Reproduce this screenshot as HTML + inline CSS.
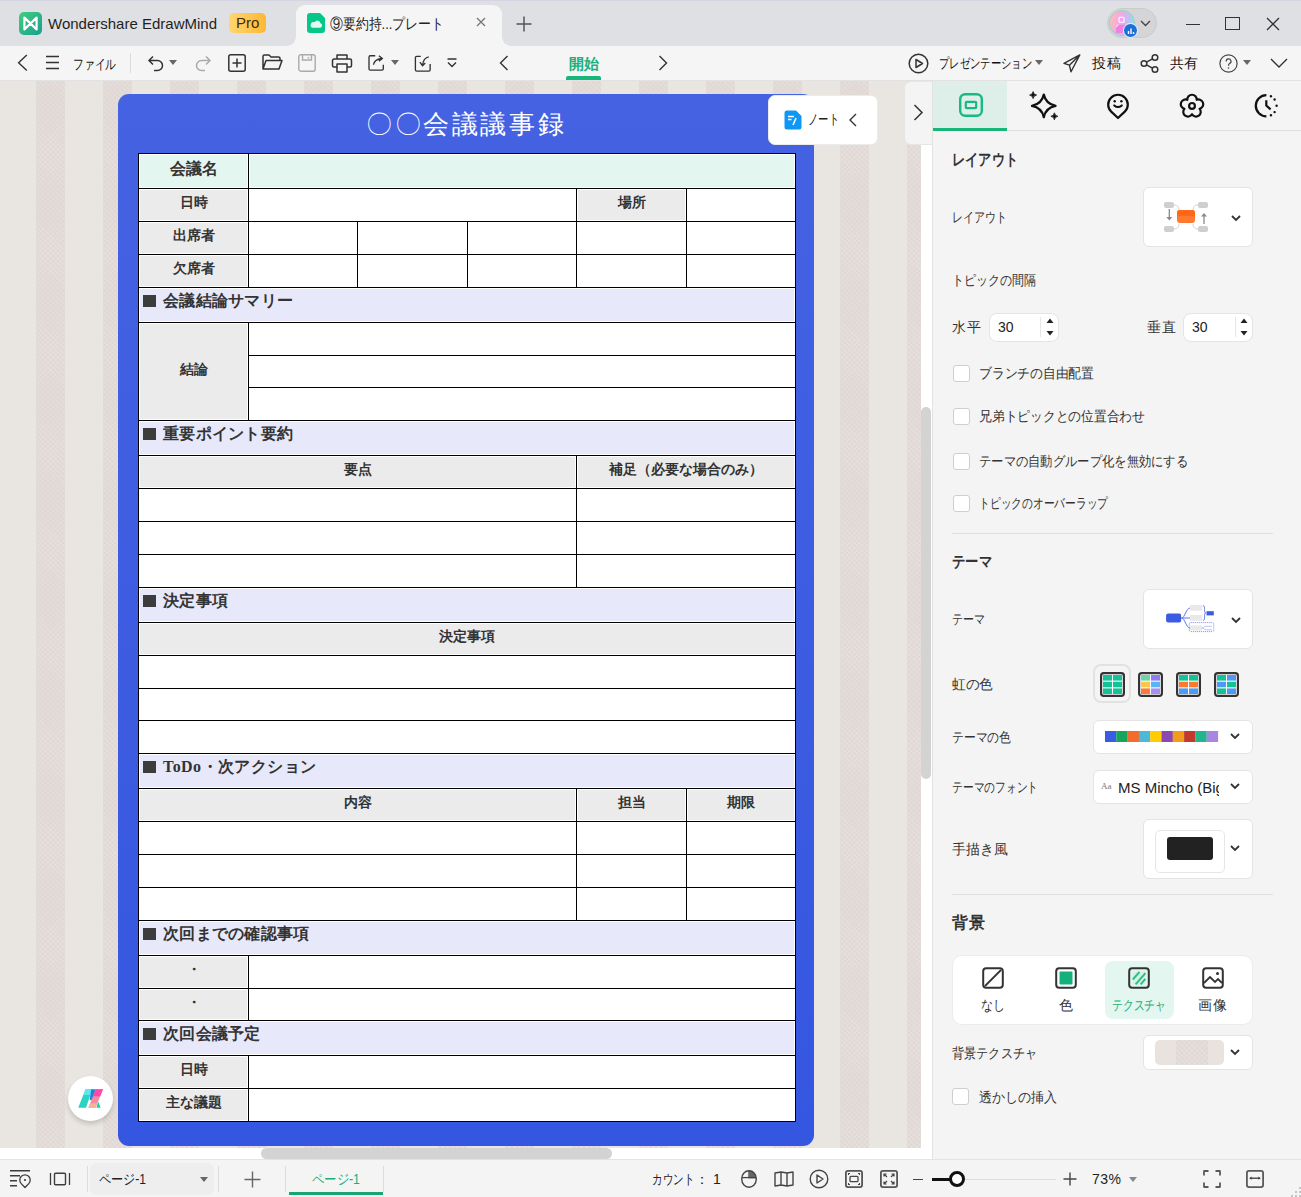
<!DOCTYPE html><html><head><meta charset="utf-8"><style>
*{box-sizing:border-box;margin:0;padding:0}
html,body{width:1301px;height:1197px;overflow:hidden;background:#f4f4f4;font-family:"Liberation Sans",sans-serif;color:#222;position:relative}
.a{position:absolute}
.t{position:absolute;white-space:nowrap;line-height:1}
svg{position:absolute;overflow:visible}
.cell{position:absolute;background:#fff}
.in{position:absolute;left:1px;top:1px;right:1px;bottom:1px}
.g{background:#ebebeb}
.m{background:#e3f6f0}
.l{background:#e7e8f9}
.ct{position:absolute;left:0;right:0;text-align:center;font-family:"Liberation Serif",serif;font-weight:bold;color:#333;white-space:nowrap;line-height:1}
.ht{position:absolute;font-family:"Liberation Serif",serif;font-weight:bold;color:#333;white-space:nowrap;line-height:1;font-size:16px;letter-spacing:0.25px}
.sq{position:absolute;width:13px;height:12px;background:#3c3c3c}
.lbl{font-size:14px;color:#333}
.hd{font-size:16px;font-weight:bold;color:#333}
.box{position:absolute;background:#fff;border:1px solid #e4e4e4;border-radius:6px}
.tex{top:0;width:29px;height:1067px;background-color:#e0d8d4;background-image:repeating-linear-gradient(45deg,rgba(255,255,255,0.13) 0 1px,transparent 1px 3.5px),repeating-linear-gradient(-45deg,rgba(255,255,255,0.11) 0 1px,transparent 1px 3.5px)}
.cb{position:absolute;width:17px;height:17px;background:#fff;border:1px solid #cfcfcf;border-radius:3px}
</style></head><body>
<div class="a" style="left:0;top:0;width:1301px;height:46px;background:#dfe0e3"></div>
<div class="a" style="left:0;top:0;width:1301px;height:1px;background:#d4d4e2"></div>
<div class="a" style="left:19px;top:12px;width:23px;height:23px;border-radius:5px;background:linear-gradient(135deg,#3fcf7f,#1a9e8e)"></div>
<svg style="left:19px;top:12px" width="23" height="23" viewBox="0 0 23 23"><path d="M5.4 5.6 L5.4 17.4 L17.6 5.6 L17.6 17.4 Z" fill="none" stroke="#fff" stroke-width="2.2" stroke-linejoin="round"/></svg>
<div class="t" style="left:48px;top:16px;font-size:15px;color:#1f1f1f">Wondershare EdrawMind</div>
<div class="a" style="left:229px;top:13px;width:37px;height:20px;border-radius:5px;background:linear-gradient(90deg,#ffd670,#ffb733)"></div>
<div class="t" style="left:236px;top:15px;font-size:15px;color:#3f2a0c">Pro</div>
<div class="a" style="left:296px;top:5px;width:206px;height:41px;background:#f5f5f5;border-radius:9px 9px 0 0"></div>
<div class="a" style="left:287px;top:37px;width:9px;height:9px;background:radial-gradient(circle at 0 0,#dfe0e3 8.5px,#f5f5f5 9px)"></div>
<div class="a" style="left:502px;top:37px;width:9px;height:9px;background:radial-gradient(circle at 100% 0,#dfe0e3 8.5px,#f5f5f5 9px)"></div>
<svg style="left:307px;top:13px" width="18" height="20" viewBox="0 0 18 20"><path d="M3 0H13L18 5V17A3 3 0 0 1 15 20H3A3 3 0 0 1 0 17V3A3 3 0 0 1 3 0Z" fill="#05c78a"/><path d="M5.5 14.8H13a2.3 2.3 0 0 0 0.4-4.5a3 3 0 0 0-5.7-1a2.6 2.6 0 0 0-2.2 5.5Z" fill="#e6f7f2"/></svg>
<div class="t" style="left:330px;top:16px;font-size:15px;color:#222;transform:scaleX(0.860);transform-origin:0 0">⑨要約持...プレート</div>
<svg style="left:476px;top:17px" width="10" height="10" viewBox="0 0 10 10"><path d="M1 1L9 9M9 1L1 9" stroke="#777" stroke-width="1.3"/></svg>
<svg style="left:516px;top:16px" width="16" height="16" viewBox="0 0 16 16"><path d="M8 0.5V15.5M0.5 8H15.5" stroke="#555" stroke-width="1.5"/></svg>
<div class="a" style="left:1107px;top:8px;width:50px;height:30px;border-radius:15px;background:#d5d5d7;border:1px solid #cbcbcd"></div>
<div class="a" style="left:1109px;top:10px;width:26px;height:26px;border-radius:13px;background:linear-gradient(100deg,#fcc3b8 0%,#f8a8dc 35%,#d2b6f4 62%,#86e4f2 100%);border:1.5px solid #86dcb8"></div>
<svg style="left:1113px;top:13px" width="18" height="20" viewBox="0 0 18 20"><rect x="6" y="4.2" width="5" height="5" rx="0.8" fill="#f5a3ef" stroke="#fff" stroke-width="1.1"/><path d="M3 20 V14 Q3 11.8 5.5 11.8 H11.5 Q14 11.8 14 14 V20Z" fill="#f07fe6"/><path d="M3.5 14 Q3.5 11.8 5.5 11.8" fill="none" stroke="#fff" stroke-width="0.9"/></svg>
<div class="a" style="left:1123px;top:23px;width:15px;height:15px;border-radius:8px;background:#1e6fd6;border:1.5px solid #fff"></div>
<svg style="left:1127px;top:27px" width="8" height="8" viewBox="0 0 8 8"><path d="M1.5 7V4M4 7V1.5M6.5 7V5" stroke="#fff" stroke-width="1.4"/></svg>
<svg style="left:1140px;top:20px" width="11" height="7" viewBox="0 0 11 7"><path d="M1 1L5.5 5.5L10 1" fill="none" stroke="#444" stroke-width="1.4"/></svg>
<div class="a" style="left:1186px;top:24px;width:14px;height:1.3px;background:#333"></div>
<div class="a" style="left:1225px;top:17px;width:15px;height:13px;border:1.3px solid #333"></div>
<svg style="left:1266px;top:17px" width="14" height="14" viewBox="0 0 14 14"><path d="M1 1L13 13M13 1L1 13" stroke="#333" stroke-width="1.3"/></svg>
<div class="a" style="left:0;top:46px;width:1301px;height:34px;background:#f5f5f5"></div>
<div class="a" style="left:0;top:80px;width:1301px;height:1px;background:#e2e2e2"></div>
<svg style="left:17px;top:54px" width="11" height="18" viewBox="0 0 11 18"><path d="M9.8 1L1.6 8.8L9.8 16.6" fill="none" stroke="#333" stroke-width="1.4"/></svg>
<svg style="left:46px;top:55px" width="13" height="15" viewBox="0 0 13 15"><path d="M0 1.5H13M0 7.5H13M0 13.5H13" stroke="#333" stroke-width="1.4"/></svg>
<div class="t" style="left:73px;top:57px;font-size:14px;color:#111;transform:scaleX(0.768);transform-origin:0 0">ファイル</div>
<div class="a" style="left:130px;top:53px;width:1px;height:20px;background:#dcdcdc"></div>
<svg style="left:147px;top:55px" width="18" height="17" viewBox="0 0 18 17"><path d="M6 1.5L2 5.5L6 9.5M2 5.5H10.5a5 5 0 0 1 0 10H7" fill="none" stroke="#333" stroke-width="1.5"/></svg>
<svg style="left:169px;top:60px" width="8" height="5" viewBox="0 0 8 5"><path d="M0 0H8L4 5Z" fill="#666"/></svg>
<svg style="left:194px;top:55px" width="18" height="17" viewBox="0 0 18 17"><path d="M12 1.5L16 5.5L12 9.5M16 5.5H7.5a5 5 0 0 0 0 10H11" fill="none" stroke="#aaa" stroke-width="1.5"/></svg>
<svg style="left:228px;top:54px" width="18" height="18" viewBox="0 0 18 18"><rect x="0.8" y="0.8" width="16.4" height="16.4" rx="2" fill="none" stroke="#333" stroke-width="1.5"/><path d="M9 4.5V13.5M4.5 9H13.5" stroke="#333" stroke-width="1.5"/></svg>
<svg style="left:262px;top:54px" width="21" height="17" viewBox="0 0 21 17"><path d="M1 15V2.5a1.5 1.5 0 0 1 1.5-1.5H7l2 2h7.5a1.5 1.5 0 0 1 1.5 1.5V6.5M1 15L4 6.5H20L17 15Z" fill="none" stroke="#333" stroke-width="1.5" stroke-linejoin="round"/></svg>
<svg style="left:298px;top:54px" width="18" height="18" viewBox="0 0 18 18"><rect x="0.8" y="0.8" width="16.4" height="16.4" rx="2" fill="none" stroke="#aaa" stroke-width="1.4"/><path d="M4.5 1V6H13.5V1M10.5 3V4.5" fill="none" stroke="#aaa" stroke-width="1.4"/></svg>
<svg style="left:332px;top:54px" width="20" height="19" viewBox="0 0 20 19"><path d="M5 5V1H15V5M5 13H2a1.5 1.5 0 0 1-1.5-1.5V6.5A1.5 1.5 0 0 1 2 5H18a1.5 1.5 0 0 1 1.5 1.5V11.5A1.5 1.5 0 0 1 18 13H15M5 10H15V18H5Z" fill="none" stroke="#333" stroke-width="1.5" stroke-linejoin="round"/></svg>
<svg style="left:368px;top:54px" width="19" height="17" viewBox="0 0 21 19"><path d="M8 2H2.5A1.5 1.5 0 0 0 1 3.5V16.5A1.5 1.5 0 0 0 2.5 18H15.5A1.5 1.5 0 0 0 17 16.5V12M6 12q1-6 9-7M12 2L16 5L12 8" fill="none" stroke="#333" stroke-width="1.5" stroke-linejoin="round"/></svg>
<svg style="left:391px;top:60px" width="8" height="5" viewBox="0 0 8 5"><path d="M0 0H8L4 5Z" fill="#666"/></svg>
<svg style="left:414px;top:55px" width="18" height="17" viewBox="0 0 19 19"><path d="M7 1.5H2.5A1.5 1.5 0 0 0 1 3V16.5A1.5 1.5 0 0 0 2.5 18H16A1.5 1.5 0 0 0 17.5 16.5V10M16 2q-6 1-7 9M6 8L9 12L12 9" fill="none" stroke="#333" stroke-width="1.5" stroke-linejoin="round"/></svg>
<svg style="left:447px;top:58px" width="10" height="11" viewBox="0 0 10 11"><path d="M0.5 1H9.5M1 4.5L5 8.5L9 4.5" fill="none" stroke="#333" stroke-width="1.4"/></svg>
<svg style="left:498px;top:55px" width="11" height="16" viewBox="0 0 11 16"><path d="M9.5 1L2.5 8L9.5 15" fill="none" stroke="#333" stroke-width="1.4"/></svg>
<div class="t" style="left:569px;top:56px;font-size:15px;font-weight:bold;color:#1cb07c">開始</div>
<div class="a" style="left:566px;top:76px;width:35px;height:4px;border-radius:2px 2px 0 0;background:#17b67a"></div>
<svg style="left:658px;top:55px" width="11" height="16" viewBox="0 0 11 16"><path d="M1.5 1L8.5 8L1.5 15" fill="none" stroke="#333" stroke-width="1.4"/></svg>
<svg style="left:908px;top:53px" width="21" height="21" viewBox="0 0 21 21"><circle cx="10.5" cy="10.5" r="9.3" fill="none" stroke="#333" stroke-width="1.5"/><path d="M8 6.5V14.5L14.5 10.5Z" fill="none" stroke="#333" stroke-width="1.5" stroke-linejoin="round"/></svg>
<div class="t" style="left:939px;top:56px;font-size:14px;color:#111;transform:scaleX(0.738);transform-origin:0 0">プレゼンテーション</div>
<svg style="left:1035px;top:60px" width="8" height="5" viewBox="0 0 8 5"><path d="M0 0H8L4 5Z" fill="#666"/></svg>
<svg style="left:1063px;top:54px" width="18" height="19" viewBox="0 0 18 19"><path d="M16.8 0.9L1 9.4L6.4 11.2L8 17.8Z M16.8 0.9L6.4 11.2" fill="none" stroke="#333" stroke-width="1.4" stroke-linejoin="round"/></svg>
<div class="t" style="left:1092px;top:56px;font-size:14px;color:#111;letter-spacing:0.60px">投稿</div>
<svg style="left:1140px;top:54px" width="19" height="19" viewBox="0 0 19 19"><circle cx="4" cy="9.5" r="2.8" fill="none" stroke="#333" stroke-width="1.5"/><circle cx="15" cy="3.5" r="2.8" fill="none" stroke="#333" stroke-width="1.5"/><circle cx="15" cy="15.5" r="2.8" fill="none" stroke="#333" stroke-width="1.5"/><path d="M6.5 8.2L12.5 4.8M6.5 10.8L12.5 14.2" stroke="#333" stroke-width="1.5"/></svg>
<div class="t" style="left:1170px;top:56px;font-size:14px;color:#111">共有</div>
<svg style="left:1218px;top:53px" width="21" height="21" viewBox="0 0 21 21"><circle cx="10.5" cy="10.5" r="8.6" fill="none" stroke="#444" stroke-width="1.2"/><path d="M8.2 8.4a2.4 2.4 0 1 1 3.4 2.1c-0.7 0.4-1 0.8-1 1.6V12.8" fill="none" stroke="#444" stroke-width="1.2"/><circle cx="10.5" cy="15" r="0.8" fill="#444"/></svg>
<svg style="left:1243px;top:60px" width="8" height="5" viewBox="0 0 8 5"><path d="M0 0H8L4 5Z" fill="#666"/></svg>
<svg style="left:1270px;top:58px" width="18" height="10" viewBox="0 0 18 10"><path d="M1 1L9 9L17 1" fill="none" stroke="#333" stroke-width="1.4"/></svg>
<div class="a" style="left:0;top:81px;width:921px;height:1067px;background:#e9e5e0;overflow:hidden">
<div class="a tex" style="left:36px"></div>
<div class="a tex" style="left:103px"></div>
<div class="a tex" style="left:170px"></div>
<div class="a tex" style="left:237px"></div>
<div class="a tex" style="left:304px"></div>
<div class="a tex" style="left:371px"></div>
<div class="a tex" style="left:438px"></div>
<div class="a tex" style="left:505px"></div>
<div class="a tex" style="left:572px"></div>
<div class="a tex" style="left:639px"></div>
<div class="a tex" style="left:706px"></div>
<div class="a tex" style="left:773px"></div>
<div class="a tex" style="left:840px"></div>
<div class="a tex" style="left:907px"></div>
</div>
<div class="a" style="left:118px;top:94px;width:696px;height:1052px;border-radius:11px;background:linear-gradient(180deg,#4562e2 0%,#3556e0 100%)"></div>
<div class="t" style="left:366px;top:112px;font-size:26px;font-family:'Liberation Serif',serif;color:#fff;letter-spacing:2.6px">〇〇会議議事録</div>
<div class="a" style="left:138px;top:153px;width:658px;height:969px;background:#000"></div>
<div class="cell" style="left:139px;top:154px;width:109px;height:34px"><div class="in m"></div><div class="ct" style="top:7.0px;font-size:16px">会議名</div></div>
<div class="cell" style="left:249px;top:154px;width:546px;height:34px"><div class="in m"></div></div>
<div class="cell" style="left:139px;top:189px;width:109px;height:32px"><div class="in g"></div><div class="ct" style="top:7.0px;font-size:14px">日時</div></div>
<div class="cell" style="left:249px;top:189px;width:327px;height:32px"></div>
<div class="cell" style="left:577px;top:189px;width:109px;height:32px"><div class="in g"></div><div class="ct" style="top:7.0px;font-size:14px">場所</div></div>
<div class="cell" style="left:687px;top:189px;width:108px;height:32px"></div>
<div class="cell" style="left:139px;top:222px;width:109px;height:32px"><div class="in g"></div><div class="ct" style="top:7.0px;font-size:14px">出席者</div></div>
<div class="cell" style="left:249px;top:222px;width:108px;height:32px"></div>
<div class="cell" style="left:358px;top:222px;width:109px;height:32px"></div>
<div class="cell" style="left:468px;top:222px;width:108px;height:32px"></div>
<div class="cell" style="left:577px;top:222px;width:109px;height:32px"></div>
<div class="cell" style="left:687px;top:222px;width:108px;height:32px"></div>
<div class="cell" style="left:139px;top:255px;width:109px;height:32px"><div class="in g"></div><div class="ct" style="top:7.0px;font-size:14px">欠席者</div></div>
<div class="cell" style="left:249px;top:255px;width:108px;height:32px"></div>
<div class="cell" style="left:358px;top:255px;width:109px;height:32px"></div>
<div class="cell" style="left:468px;top:255px;width:108px;height:32px"></div>
<div class="cell" style="left:577px;top:255px;width:109px;height:32px"></div>
<div class="cell" style="left:687px;top:255px;width:108px;height:32px"></div>
<div class="cell" style="left:139px;top:288px;width:656px;height:34px"><div class="in l"></div><div class="sq" style="left:4px;top:7px"></div><div class="ht" style="left:24px;top:5px">会議結論サマリー</div></div>
<div class="cell" style="left:139px;top:323px;width:109px;height:97px"><div class="in g"></div><div class="ct" style="top:39.5px;font-size:14px">結論</div></div>
<div class="cell" style="left:249px;top:323px;width:546px;height:32px"></div>
<div class="cell" style="left:249px;top:356px;width:546px;height:31px"></div>
<div class="cell" style="left:249px;top:388px;width:546px;height:32px"></div>
<div class="cell" style="left:139px;top:421px;width:656px;height:34px"><div class="in l"></div><div class="sq" style="left:4px;top:7px"></div><div class="ht" style="left:24px;top:5px">重要ポイント要約</div></div>
<div class="cell" style="left:139px;top:456px;width:437px;height:32px"><div class="in g"></div><div class="ct" style="top:7.0px;font-size:14px">要点</div></div>
<div class="cell" style="left:577px;top:456px;width:218px;height:32px"><div class="in g"></div><div class="ct" style="top:7.0px;font-size:14px">補足（必要な場合のみ）</div></div>
<div class="cell" style="left:139px;top:489px;width:437px;height:32px"></div>
<div class="cell" style="left:577px;top:489px;width:218px;height:32px"></div>
<div class="cell" style="left:139px;top:522px;width:437px;height:32px"></div>
<div class="cell" style="left:577px;top:522px;width:218px;height:32px"></div>
<div class="cell" style="left:139px;top:555px;width:437px;height:32px"></div>
<div class="cell" style="left:577px;top:555px;width:218px;height:32px"></div>
<div class="cell" style="left:139px;top:588px;width:656px;height:34px"><div class="in l"></div><div class="sq" style="left:4px;top:7px"></div><div class="ht" style="left:24px;top:5px">決定事項</div></div>
<div class="cell" style="left:139px;top:623px;width:656px;height:32px"><div class="in g"></div><div class="ct" style="top:7.0px;font-size:14px">決定事項</div></div>
<div class="cell" style="left:139px;top:656px;width:656px;height:32px"></div>
<div class="cell" style="left:139px;top:689px;width:656px;height:31px"></div>
<div class="cell" style="left:139px;top:721px;width:656px;height:32px"></div>
<div class="cell" style="left:139px;top:754px;width:656px;height:34px"><div class="in l"></div><div class="sq" style="left:4px;top:7px"></div><div class="ht" style="left:24px;top:5px"><span style="letter-spacing:0.45px">ToDo・次アクション</span></div></div>
<div class="cell" style="left:139px;top:789px;width:437px;height:32px"><div class="in g"></div><div class="ct" style="top:7.0px;font-size:14px">内容</div></div>
<div class="cell" style="left:577px;top:789px;width:109px;height:32px"><div class="in g"></div><div class="ct" style="top:7.0px;font-size:14px">担当</div></div>
<div class="cell" style="left:687px;top:789px;width:108px;height:32px"><div class="in g"></div><div class="ct" style="top:7.0px;font-size:14px">期限</div></div>
<div class="cell" style="left:139px;top:822px;width:437px;height:32px"></div>
<div class="cell" style="left:577px;top:822px;width:109px;height:32px"></div>
<div class="cell" style="left:687px;top:822px;width:108px;height:32px"></div>
<div class="cell" style="left:139px;top:855px;width:437px;height:32px"></div>
<div class="cell" style="left:577px;top:855px;width:109px;height:32px"></div>
<div class="cell" style="left:687px;top:855px;width:108px;height:32px"></div>
<div class="cell" style="left:139px;top:888px;width:437px;height:32px"></div>
<div class="cell" style="left:577px;top:888px;width:109px;height:32px"></div>
<div class="cell" style="left:687px;top:888px;width:108px;height:32px"></div>
<div class="cell" style="left:139px;top:921px;width:656px;height:34px"><div class="in l"></div><div class="sq" style="left:4px;top:7px"></div><div class="ht" style="left:24px;top:5px">次回までの確認事項</div></div>
<div class="cell" style="left:139px;top:956px;width:109px;height:32px"><div class="in g"></div><div class="ct" style="top:7.0px;font-size:14px">・</div></div>
<div class="cell" style="left:249px;top:956px;width:546px;height:32px"></div>
<div class="cell" style="left:139px;top:989px;width:109px;height:31px"><div class="in g"></div><div class="ct" style="top:6.5px;font-size:14px">・</div></div>
<div class="cell" style="left:249px;top:989px;width:546px;height:31px"></div>
<div class="cell" style="left:139px;top:1021px;width:656px;height:34px"><div class="in l"></div><div class="sq" style="left:4px;top:7px"></div><div class="ht" style="left:24px;top:5px">次回会議予定</div></div>
<div class="cell" style="left:139px;top:1056px;width:109px;height:32px"><div class="in g"></div><div class="ct" style="top:7.0px;font-size:14px">日時</div></div>
<div class="cell" style="left:249px;top:1056px;width:546px;height:32px"></div>
<div class="cell" style="left:139px;top:1089px;width:109px;height:32px"><div class="in g"></div><div class="ct" style="top:7.0px;font-size:14px">主な議題</div></div>
<div class="cell" style="left:249px;top:1089px;width:546px;height:32px"></div>
<div class="a" style="left:768px;top:95px;width:110px;height:50px;background:#fff;border-radius:7px;border:1px solid #ececec"></div>
<svg style="left:784px;top:110px" width="18" height="20" viewBox="0 0 18 20"><path d="M3 0.5H12L17.5 6V17A2.5 2.5 0 0 1 15 19.5H3A2.5 2.5 0 0 1 0.5 17V3A2.5 2.5 0 0 1 3 0.5Z" fill="#0f97f5"/><path d="M4 6.5H10M4 9.5H7.5M12 8L9 15" stroke="#fff" stroke-width="1.6"/></svg>
<div class="t" style="left:808px;top:112px;font-size:14px;color:#222;transform:scaleX(0.738);transform-origin:0 0">ノート</div>
<svg style="left:848px;top:113px" width="9" height="14" viewBox="0 0 9 14"><path d="M8 1L2 7L8 13" fill="none" stroke="#333" stroke-width="1.4"/></svg>
<div class="a" style="left:904px;top:81px;width:29px;height:64px;background:#f4f4f4;border-radius:7px 0 0 7px;border:1px solid #e6e6e6;border-right:none"></div>
<svg style="left:913px;top:104px" width="11" height="17" viewBox="0 0 11 17"><path d="M1.5 1L9 8.5L1.5 16" fill="none" stroke="#333" stroke-width="1.5"/></svg>
<div class="a" style="left:921px;top:145px;width:11px;height:1003px;background:#fff"></div>
<div class="a" style="left:921px;top:407px;width:10px;height:372px;border-radius:5px;background:#d3d3d3"></div>
<div class="a" style="left:0;top:1148px;width:932px;height:11px;background:#fff"></div>
<div class="a" style="left:261px;top:1148px;width:351px;height:11px;border-radius:5.5px;background:#d3d3d3"></div>
<div class="a" style="left:68px;top:1076px;width:45px;height:45px;border-radius:50%;background:#fff;box-shadow:0 3px 5px rgba(0,0,0,0.16)"></div>
<svg style="left:77px;top:1088px" width="28" height="21" viewBox="0 0 28 21"><path d="M1.2 19.8L8.6 1.2H15.4L9 19.8Z" fill="#2bd4c0"/><path d="M6.2 7H13.1L15.4 1.2H8.6Z" fill="#5fe6ef"/><path d="M14.2 1.2H19L15.6 11.8L12.6 12.2Z" fill="#1f86d4"/><path d="M19.4 19.8H23.6L21.2 13.6Z" fill="#15cfae"/><path d="M18.8 1.2H26L18.6 19.8H11.4Z" fill="#f58aa0"/><path d="M18.8 1.2H26L23.2 8.2H16Z" fill="#ff45b0"/><path d="M13.2 15.3H20.4L18.6 19.8H11.4Z" fill="#f2b495"/></svg>
<div class="a" style="left:932px;top:81px;width:369px;height:1078px;background:#f4f4f4;border-left:1px solid #e2e2e2"></div>
<div class="a" style="left:933px;top:81px;width:74px;height:47px;background:#deefea"></div>
<div class="a" style="left:933px;top:128px;width:74px;height:3px;background:#16b57a"></div>
<div class="a" style="left:1007px;top:130px;width:294px;height:1px;background:#e0e0e0"></div>
<svg style="left:959px;top:93px" width="24" height="24" viewBox="0 0 24 24"><rect x="1.2" y="1.2" width="21.6" height="21.6" rx="5" fill="none" stroke="#19b982" stroke-width="2.4"/><rect x="6.8" y="8.8" width="10.4" height="6.4" rx="1" fill="none" stroke="#19b982" stroke-width="2.2"/></svg>
<svg style="left:1029px;top:91px" width="30" height="30" viewBox="0 0 30 30"><path d="M14.8 3.6 Q16.8 13 26.6 14.9 Q16.8 16.8 14.8 26.2 Q12.8 16.8 3 14.9 Q12.8 13 14.8 3.6Z" fill="none" stroke="#111" stroke-width="2.3" stroke-linejoin="round"/><path d="M4.1 0.6 Q4.5 3.7 7.6 4.1 Q4.5 4.5 4.1 7.6 Q3.7 4.5 0.6 4.1 Q3.7 3.7 4.1 0.6Z M25.4 21.8 Q25.8 24.9 28.9 25.3 Q25.8 25.7 25.4 28.8 Q25 25.7 21.9 25.3 Q25 24.9 25.4 21.8Z" fill="#111" stroke="#111" stroke-width="0.8" stroke-linejoin="round"/></svg>
<svg style="left:1106px;top:93px" width="24" height="28" viewBox="0 0 24 28"><path d="M12 25 L5.2 18.6 A9.8 9.8 0 1 1 18.8 18.6 Z" fill="none" stroke="#111" stroke-width="2.2" stroke-linejoin="round"/><circle cx="8.7" cy="8.3" r="1.2" fill="#111"/><circle cx="15.4" cy="8.3" r="1.2" fill="#111"/><path d="M8.2 12.4 Q12 15.6 15.8 12.4" fill="none" stroke="#111" stroke-width="2" stroke-linecap="round"/></svg>
<svg style="left:1180px;top:94px" width="24" height="24" viewBox="0 0 24 24"><path d="M7.32 5.86 A4.7 4.7 0 1 1 16.68 5.86 A4.7 4.7 0 1 1 19.57 14.76 A4.7 4.7 0 1 1 12.00 20.26 A4.7 4.7 0 1 1 4.43 14.76 A4.7 4.7 0 1 1 7.32 5.86Z" fill="none" stroke="#111" stroke-width="2.2" stroke-linejoin="round"/><circle cx="12" cy="11.9" r="2.9" fill="none" stroke="#111" stroke-width="2.2"/></svg>
<svg style="left:1254px;top:94px" width="26" height="24" viewBox="0 0 26 24"><path d="M12.4 1.2 A10.6 10.6 0 0 0 12.4 22.4" fill="none" stroke="#111" stroke-width="2.3"/><g fill="#111"><circle cx="16.9" cy="2.3" r="1.2"/><circle cx="20.6" cy="5.5" r="1.2"/><circle cx="22.6" cy="11.8" r="1.2"/><circle cx="20.6" cy="18.1" r="1.2"/><circle cx="16.9" cy="21.3" r="1.2"/></g><path d="M12.3 6.3V11.6L16.6 15.3" fill="none" stroke="#111" stroke-width="2.2"/></svg>
<div class="t hd" style="left:952px;top:152px;;transform:scaleX(0.825);transform-origin:0 0">レイアウト</div>
<div class="t lbl" style="left:952px;top:210px;;transform:scaleX(0.786);transform-origin:0 0">レイアウト</div>
<div class="box" style="left:1143px;top:187px;width:110px;height:60px"></div>
<svg style="left:1163px;top:201px" width="46" height="32" viewBox="0 0 46 32"><g fill="#cfcfcf"><rect x="1" y="1" width="10" height="6" rx="2"/><rect x="35" y="1" width="10" height="6" rx="2"/><rect x="1" y="25" width="10" height="6" rx="2"/><rect x="35" y="25" width="10" height="6" rx="2"/></g><path d="M11 4 Q16 4 16 9 M35 4 Q30 4 30 9 M11 28 Q16 28 16 23 M35 28 Q30 28 30 23" fill="none" stroke="#d5d5d5" stroke-width="1"/><rect x="14" y="9" width="18" height="13" rx="3" fill="#ff7a30"/><rect x="14" y="9" width="18" height="6" rx="3" fill="#ff6816"/><rect x="14" y="12" width="18" height="3" fill="#ff6816"/><path d="M6.3 8V16M41 23V15" stroke="#8a8a8a" stroke-width="1.3"/><path d="M3.3 16H9.3L6.3 19.5Z M38 15.5H44L41 12Z" fill="#8a8a8a"/></svg>
<svg style="left:1231px;top:215px" width="10" height="7" viewBox="0 0 10 7"><path d="M1 1L5 5L9 1" fill="none" stroke="#333" stroke-width="1.8"/></svg>
<div class="t lbl" style="left:952px;top:273px;;transform:scaleX(0.857);transform-origin:0 0">トピックの間隔</div>
<div class="t lbl" style="left:952px;top:320px;;letter-spacing:0.60px">水平</div>
<div class="box" style="left:989px;top:313px;width:70px;height:29px;border-radius:8px"></div>
<div class="t" style="left:998px;top:320px;font-size:14px;color:#222">30</div>
<div class="a" style="left:1040px;top:317px;width:1px;height:20px;background:#e6e6e6"></div>
<svg style="left:1046px;top:318px" width="8" height="18" viewBox="0 0 8 18"><path d="M0.5 5H7.5L4 0.5Z M0.5 13H7.5L4 17.5Z" fill="#222"/></svg>
<div class="t lbl" style="left:1147px;top:320px;;letter-spacing:0.60px">垂直</div>
<div class="box" style="left:1183px;top:313px;width:70px;height:29px;border-radius:8px"></div>
<div class="t" style="left:1192px;top:320px;font-size:14px;color:#222">30</div>
<div class="a" style="left:1235px;top:317px;width:1px;height:20px;background:#e6e6e6"></div>
<svg style="left:1240px;top:318px" width="8" height="18" viewBox="0 0 8 18"><path d="M0.5 5H7.5L4 0.5Z M0.5 13H7.5L4 17.5Z" fill="#222"/></svg>
<div class="cb" style="left:953px;top:365px"></div>
<div class="t lbl" style="left:979px;top:366px;;transform:scaleX(0.913);transform-origin:0 0">ブランチの自由配置</div>
<div class="cb" style="left:953px;top:408px"></div>
<div class="t lbl" style="left:979px;top:409px;;transform:scaleX(0.912);transform-origin:0 0">兄弟トピックとの位置合わせ</div>
<div class="cb" style="left:953px;top:453px"></div>
<div class="t lbl" style="left:979px;top:454px;;transform:scaleX(0.878);transform-origin:0 0">テーマの自動グループ化を無効にする</div>
<div class="cb" style="left:953px;top:495px"></div>
<div class="t lbl" style="left:979px;top:496px;;transform:scaleX(0.768);transform-origin:0 0">トピックのオーバーラップ</div>
<div class="a" style="left:952px;top:533px;width:321px;height:1px;background:#e0e0e0"></div>
<div class="t hd" style="left:952px;top:554px;;transform:scaleX(0.833);transform-origin:0 0">テーマ</div>
<div class="t lbl" style="left:952px;top:612px;;transform:scaleX(0.786);transform-origin:0 0">テーマ</div>
<div class="box" style="left:1143px;top:589px;width:110px;height:60px"></div>
<svg style="left:1163px;top:602px" width="54" height="32" viewBox="0 0 54 32"><g fill="none" stroke="#4a67e6" stroke-width="0.9"><path d="M18.5 16 C22 16 23 6 27 6 M18.5 16 H27 M18.5 16 C22 16 23 26 27 26"/><path d="M40 3.5 Q41.6 3.5 41.6 6.5 V9 Q41.6 11 42.8 11 Q41.6 11 41.6 13 V16 Q41.6 18.5 40 18.5" stroke-width="0.8"/><path d="M39 26 Q41 26 42 24.3 H49 M39 26 Q41 26 42 27.8 H49" stroke="#8b9cf0" stroke-width="0.6"/><rect x="26.2" y="20.6" width="24.6" height="9" rx="1.5" stroke="#6f86ee" stroke-width="0.8" stroke-dasharray="1.2 0.8"/></g><rect x="3.1" y="11.5" width="15" height="9" rx="2" fill="#3d5be0"/><rect x="27" y="3" width="12.3" height="5.8" fill="#e9e9e9"/><rect x="27" y="13" width="12.3" height="5.8" fill="#e9e9e9"/><rect x="27" y="23.4" width="12" height="5.1" fill="#e9e9e9"/><rect x="43.5" y="9.2" width="7.3" height="4.2" fill="#3d5be0"/></svg>
<svg style="left:1231px;top:617px" width="10" height="7" viewBox="0 0 10 7"><path d="M1 1L5 5L9 1" fill="none" stroke="#333" stroke-width="1.8"/></svg>
<div class="t lbl" style="left:952px;top:677px;;transform:scaleX(0.976);transform-origin:0 0">虹の色</div>
<div class="a" style="left:1093px;top:664px;width:38px;height:39px;border-radius:8px;border:2px solid #e2e2e2"></div>
<svg style="left:1100px;top:672px" width="25" height="25" viewBox="0 0 25 25"><rect x="1.1" y="1.1" width="22.8" height="22.8" rx="2.6" fill="#fff" stroke="#333" stroke-width="2.2"/><rect x="3" y="3" width="9" height="5.6" fill="#13c296"/><rect x="13" y="3" width="9" height="5.6" fill="#13c296"/><rect x="3" y="9.7" width="9" height="5.6" fill="#13c296"/><rect x="13" y="9.7" width="9" height="5.6" fill="#13c296"/><rect x="3" y="16.4" width="9" height="5.6" fill="#13c296"/><rect x="13" y="16.4" width="9" height="5.6" fill="#13c296"/></svg>
<svg style="left:1138px;top:672px" width="25" height="25" viewBox="0 0 25 25"><rect x="1.1" y="1.1" width="22.8" height="22.8" rx="2.6" fill="#fff" stroke="#333" stroke-width="2.2"/><rect x="3" y="3" width="9" height="5.6" fill="#6fd3a5"/><rect x="13" y="3" width="9" height="5.6" fill="#8f7cf0"/><rect x="3" y="9.7" width="9" height="5.6" fill="#fcc64a"/><rect x="13" y="9.7" width="9" height="5.6" fill="#5ab3f5"/><rect x="3" y="16.4" width="9" height="5.6" fill="#fb7a3c"/><rect x="13" y="16.4" width="9" height="5.6" fill="#a58ff2"/></svg>
<svg style="left:1176px;top:672px" width="25" height="25" viewBox="0 0 25 25"><rect x="1.1" y="1.1" width="22.8" height="22.8" rx="2.6" fill="#fff" stroke="#333" stroke-width="2.2"/><rect x="3" y="3" width="9" height="5.6" fill="#13c296"/><rect x="13" y="3" width="9" height="5.6" fill="#13c296"/><rect x="3" y="9.7" width="9" height="5.6" fill="#fb7a2e"/><rect x="13" y="9.7" width="9" height="5.6" fill="#fb7a2e"/><rect x="3" y="16.4" width="9" height="5.6" fill="#4d9af5"/><rect x="13" y="16.4" width="9" height="5.6" fill="#4d9af5"/></svg>
<svg style="left:1214px;top:672px" width="25" height="25" viewBox="0 0 25 25"><rect x="1.1" y="1.1" width="22.8" height="22.8" rx="2.6" fill="#fff" stroke="#333" stroke-width="2.2"/><rect x="3" y="3" width="9" height="5.6" fill="#13c296"/><rect x="13" y="3" width="9" height="5.6" fill="#4d9af5"/><rect x="3" y="9.7" width="9" height="5.6" fill="#4d9af5"/><rect x="13" y="9.7" width="9" height="5.6" fill="#13c296"/><rect x="3" y="16.4" width="9" height="5.6" fill="#13c296"/><rect x="13" y="16.4" width="9" height="5.6" fill="#4d9af5"/></svg>
<div class="t lbl" style="left:952px;top:730px;;transform:scaleX(0.843);transform-origin:0 0">テーマの色</div>
<div class="box" style="left:1093px;top:720px;width:160px;height:34px"></div>
<svg style="left:1105px;top:731px" width="114" height="11" viewBox="0 0 114 11"><rect x="0.0" y="0" width="11.4" height="11" fill="#3a5ce0"/><rect x="11.3" y="0" width="11.4" height="11" fill="#16a55a"/><rect x="22.6" y="0" width="11.4" height="11" fill="#f36c2c"/><rect x="33.9" y="0" width="11.4" height="11" fill="#4fb7d7"/><rect x="45.2" y="0" width="11.4" height="11" fill="#ffcc00"/><rect x="56.5" y="0" width="11.4" height="11" fill="#8a49b2"/><rect x="67.8" y="0" width="11.4" height="11" fill="#f39c1c"/><rect x="79.1" y="0" width="11.4" height="11" fill="#c23a2e"/><rect x="90.4" y="0" width="11.4" height="11" fill="#22b68f"/><rect x="101.7" y="0" width="11.4" height="11" fill="#a887e3"/></svg>
<svg style="left:1230px;top:733px" width="10" height="7" viewBox="0 0 10 7"><path d="M1 1L5 5L9 1" fill="none" stroke="#333" stroke-width="1.8"/></svg>
<div class="t lbl" style="left:952px;top:780px;;transform:scaleX(0.768);transform-origin:0 0">テーマのフォント</div>
<div class="box" style="left:1093px;top:770px;width:160px;height:34px"></div>
<div class="t" style="left:1101px;top:782px;font-size:9px;color:#777;font-family:'Liberation Serif',serif">Aa</div>
<div class="a" style="left:1118px;top:778px;width:101px;height:20px;overflow:hidden"><div class="t" style="left:0;top:2px;font-size:15px;color:#222">MS Mincho (Big</div></div>
<svg style="left:1230px;top:783px" width="10" height="7" viewBox="0 0 10 7"><path d="M1 1L5 5L9 1" fill="none" stroke="#333" stroke-width="1.8"/></svg>
<div class="t lbl" style="left:952px;top:842px;">手描き風</div>
<div class="box" style="left:1143px;top:819px;width:110px;height:60px"></div>
<div class="a" style="left:1155px;top:830px;width:70px;height:43px;border:1px solid #e6e6e6;border-radius:5px;background:#fff"></div>
<div class="a" style="left:1167px;top:837px;width:46px;height:23px;border-radius:3px;background:#222"></div>
<svg style="left:1230px;top:845px" width="10" height="7" viewBox="0 0 10 7"><path d="M1 1L5 5L9 1" fill="none" stroke="#333" stroke-width="1.8"/></svg>
<div class="a" style="left:952px;top:894px;width:321px;height:1px;background:#e0e0e0"></div>
<div class="t hd" style="left:952px;top:915px;;letter-spacing:0.60px">背景</div>
<div class="a" style="left:952px;top:955px;width:301px;height:70px;border-radius:10px;background:#fff;border:1px solid #ececec"></div>
<div class="a" style="left:1105px;top:961px;width:69px;height:58px;border-radius:8px;background:#e3f6ef"></div>
<svg style="left:982px;top:967px" width="22" height="22" viewBox="0 0 22 22"><rect x="1.2" y="1.2" width="19.6" height="19.6" rx="3" fill="none" stroke="#333" stroke-width="2"/><path d="M3 19L19 3" stroke="#333" stroke-width="1.8"/></svg>
<svg style="left:1055px;top:967px" width="22" height="22" viewBox="0 0 22 22"><rect x="1.2" y="1.2" width="19.6" height="19.6" rx="3" fill="none" stroke="#333" stroke-width="2"/><rect x="4.5" y="4.5" width="13" height="13" rx="1" fill="#14b07a"/></svg>
<svg style="left:1128px;top:967px" width="22" height="22" viewBox="0 0 22 22"><rect x="1.2" y="1.2" width="19.6" height="19.6" rx="3" fill="none" stroke="#333" stroke-width="2"/><rect x="4.5" y="4.5" width="13" height="13" fill="#d4f3e4"/><path d="M4.8 12.5L11.5 4.8M7.6 17.4L17.4 6.2M12.6 17.4L17.4 11.8" stroke="#2dbf84" stroke-width="2"/></svg>
<svg style="left:1202px;top:967px" width="22" height="22" viewBox="0 0 22 22"><rect x="1.2" y="1.2" width="19.6" height="19.6" rx="3" fill="none" stroke="#333" stroke-width="2"/><path d="M2 16L8 10L13 15L16 12L20 16" fill="none" stroke="#333" stroke-width="1.8"/><circle cx="15.5" cy="6.5" r="1.5" fill="#333"/></svg>
<div class="t lbl" style="left:981px;top:998px;;transform:scaleX(0.857);transform-origin:0 0">なし</div>
<div class="t lbl" style="left:1059px;top:998px;">色</div>
<div class="t lbl" style="left:1112px;top:998px;color:#1aae7a;transform:scaleX(0.771);transform-origin:0 0">テクスチャ</div>
<div class="t lbl" style="left:1198px;top:998px;;letter-spacing:0.60px">画像</div>
<div class="t lbl" style="left:952px;top:1046px;;transform:scaleX(0.867);transform-origin:0 0">背景テクスチャ</div>
<div class="box" style="left:1143px;top:1035px;width:110px;height:35px"></div>
<div class="a" style="left:1155px;top:1040px;width:69px;height:25px;border-radius:5px;background:#e8e3de;overflow:hidden"><div class="a tex" style="left:21px;width:32px;height:25px"></div></div>
<svg style="left:1230px;top:1049px" width="10" height="7" viewBox="0 0 10 7"><path d="M1 1L5 5L9 1" fill="none" stroke="#333" stroke-width="1.8"/></svg>
<div class="cb" style="left:952px;top:1088px"></div>
<div class="t lbl" style="left:979px;top:1090px;;transform:scaleX(0.929);transform-origin:0 0">透かしの挿入</div>
<div class="a" style="left:0;top:1159px;width:1301px;height:38px;background:#f4f4f4;border-top:1px solid #e3e3e3"></div>
<svg style="left:10px;top:1169px" width="21" height="20" viewBox="0 0 21 20"><path d="M0 1.8H20M0 6.8H10M0 11.8H7M0 16.8H7" stroke="#3d3d3d" stroke-width="1.5"/><path d="M15 18.5 L11.2 14.6 A5.2 5.2 0 1 1 18.8 14.6Z" fill="none" stroke="#3d3d3d" stroke-width="1.3" stroke-linejoin="round"/><circle cx="15" cy="11" r="1.1" fill="#3d3d3d"/></svg>
<svg style="left:49px;top:1172px" width="22" height="14" viewBox="0 0 22 14"><path d="M1.5 1V13M20.5 1V13" stroke="#3d3d3d" stroke-width="1.3"/><rect x="5.5" y="1.2" width="11" height="11.6" rx="1" fill="none" stroke="#3d3d3d" stroke-width="1.4"/></svg>
<div class="a" style="left:87px;top:1166px;width:1px;height:26px;background:#dcdcdc"></div>
<div class="a" style="left:90px;top:1163px;width:124px;height:32px;border-radius:7px;background:#eeeeef"></div>
<div class="t" style="left:99px;top:1172px;font-size:14px;color:#222;transform:scaleX(0.863);transform-origin:0 0">ページ-1</div>
<svg style="left:200px;top:1177px" width="8" height="5" viewBox="0 0 8 5"><path d="M0 0H8L4 5Z" fill="#666"/></svg>
<div class="a" style="left:218px;top:1166px;width:1px;height:26px;background:#dcdcdc"></div>
<svg style="left:244px;top:1171px" width="17" height="17" viewBox="0 0 17 17"><path d="M8.5 0.5V16.5M0.5 8.5H16.5" stroke="#666" stroke-width="1.4"/></svg>
<div class="a" style="left:285px;top:1166px;width:1px;height:26px;background:#dcdcdc"></div>
<div class="t" style="left:312px;top:1172px;font-size:14px;color:#1aae7a;transform:scaleX(0.881);transform-origin:0 0">ページ-1</div>
<div class="a" style="left:289px;top:1192px;width:94px;height:3px;background:#17a572"></div>
<div class="a" style="left:383px;top:1166px;width:1px;height:26px;background:#dcdcdc"></div>
<div class="t" style="left:652px;top:1172px;font-size:14px;color:#222;transform:scaleX(0.750);transform-origin:0 0">カウント</div>
<div class="t" style="left:695px;top:1172px;font-size:14px;color:#222">：</div>
<div class="t" style="left:713px;top:1172px;font-size:14px;color:#222">1</div>
<svg style="left:741px;top:1170px" width="16" height="18" viewBox="0 0 16 18"><path d="M8 0.8V7.6H15.2" fill="none" stroke="#444" stroke-width="1.3"/><path d="M8 0.8A7.2 7.6 0 0 1 15.2 7.6H8Z" fill="#666"/><rect x="0.8" y="0.8" width="14.4" height="16.4" rx="7.2" ry="7.6" fill="none" stroke="#444" stroke-width="1.4"/><path d="M0.8 7.6H15.2" stroke="#444" stroke-width="1.3"/></svg>
<svg style="left:774px;top:1171px" width="20" height="16" viewBox="0 0 20 16"><path d="M1 2L7 1L13 2L19 1V14L13 15L7 14L1 15Z M7 1V14 M13 2V15" fill="none" stroke="#444" stroke-width="1.4" stroke-linejoin="round"/></svg>
<svg style="left:809px;top:1169px" width="20" height="20" viewBox="0 0 20 20"><circle cx="10" cy="10" r="8.8" fill="none" stroke="#444" stroke-width="1.4"/><path d="M8 6V14L14 10Z" fill="none" stroke="#444" stroke-width="1.4" stroke-linejoin="round"/></svg>
<svg style="left:845px;top:1170px" width="18" height="18" viewBox="0 0 18 18"><rect x="0.9" y="0.9" width="16.2" height="16.2" rx="2" fill="none" stroke="#555" stroke-width="1.8"/><rect x="5" y="6.3" width="8" height="5.4" rx="1" fill="none" stroke="#444" stroke-width="1.3"/><path d="M3.5 5V3.5H5M13 3.5H14.5V5M14.5 13V14.5H13M5 14.5H3.5V13" fill="none" stroke="#444" stroke-width="1.1"/></svg>
<svg style="left:880px;top:1170px" width="18" height="18" viewBox="0 0 18 18"><rect x="0.9" y="0.9" width="16.2" height="16.2" rx="2" fill="none" stroke="#555" stroke-width="1.8"/><path d="M4 6.5V4H6.5M4 4L7 7M14 6.5V4H11.5M14 4L11 7M4 11.5V14H6.5M4 14L7 11M14 11.5V14H11.5M14 14L11 11" fill="none" stroke="#444" stroke-width="1.2"/></svg>
<div class="a" style="left:913px;top:1179px;width:10px;height:1.4px;background:#444"></div>
<div class="a" style="left:932px;top:1179px;width:124px;height:1px;background:#dcdcdc"></div>
<div class="a" style="left:932px;top:1178px;width:22px;height:2.5px;background:#111"></div>
<div class="a" style="left:949px;top:1171px;width:16px;height:16px;border-radius:50%;background:#fff;border:3px solid #111"></div>
<svg style="left:1063px;top:1172px" width="14" height="14" viewBox="0 0 14 14"><path d="M7 0.5V13.5M0.5 7H13.5" stroke="#444" stroke-width="1.4"/></svg>
<div class="t" style="left:1092px;top:1172px;font-size:14px;color:#222;letter-spacing:0.48px">73%</div>
<svg style="left:1129px;top:1177px" width="8" height="5" viewBox="0 0 8 5"><path d="M0 0H8L4 5Z" fill="#888"/></svg>
<svg style="left:1203px;top:1170px" width="18" height="18" viewBox="0 0 18 18"><path d="M1 5.5V1.2Q1 1 1.2 1H5.5M12.5 1H16.8Q17 1 17 1.2V5.5M17 12.5V16.8Q17 17 16.8 17H12.5M5.5 17H1.2Q1 17 1 16.8V12.5" fill="none" stroke="#5a5a5a" stroke-width="1.8"/></svg>
<svg style="left:1246px;top:1170px" width="18" height="18" viewBox="0 0 18 18"><rect x="0.9" y="0.9" width="16.2" height="16.2" rx="2" fill="none" stroke="#5a5a5a" stroke-width="1.8"/><path d="M4.5 8.2H13.5" stroke="#3a3a3a" stroke-width="1.3"/><path d="M3.2 8.2L5.6 6.6V9.8Z M14.8 8.2L12.4 6.6V9.8Z" fill="#3a3a3a"/></svg>
<svg style="left:1290px;top:1186px" width="11" height="11" viewBox="0 0 11 11"><g fill="#c4c4c4"><rect x="9" y="1" width="2" height="2"/><rect x="5" y="5" width="2" height="2"/><rect x="9" y="5" width="2" height="2"/><rect x="1" y="9" width="2" height="2"/><rect x="5" y="9" width="2" height="2"/><rect x="9" y="9" width="2" height="2"/></g></svg>
</body></html>
